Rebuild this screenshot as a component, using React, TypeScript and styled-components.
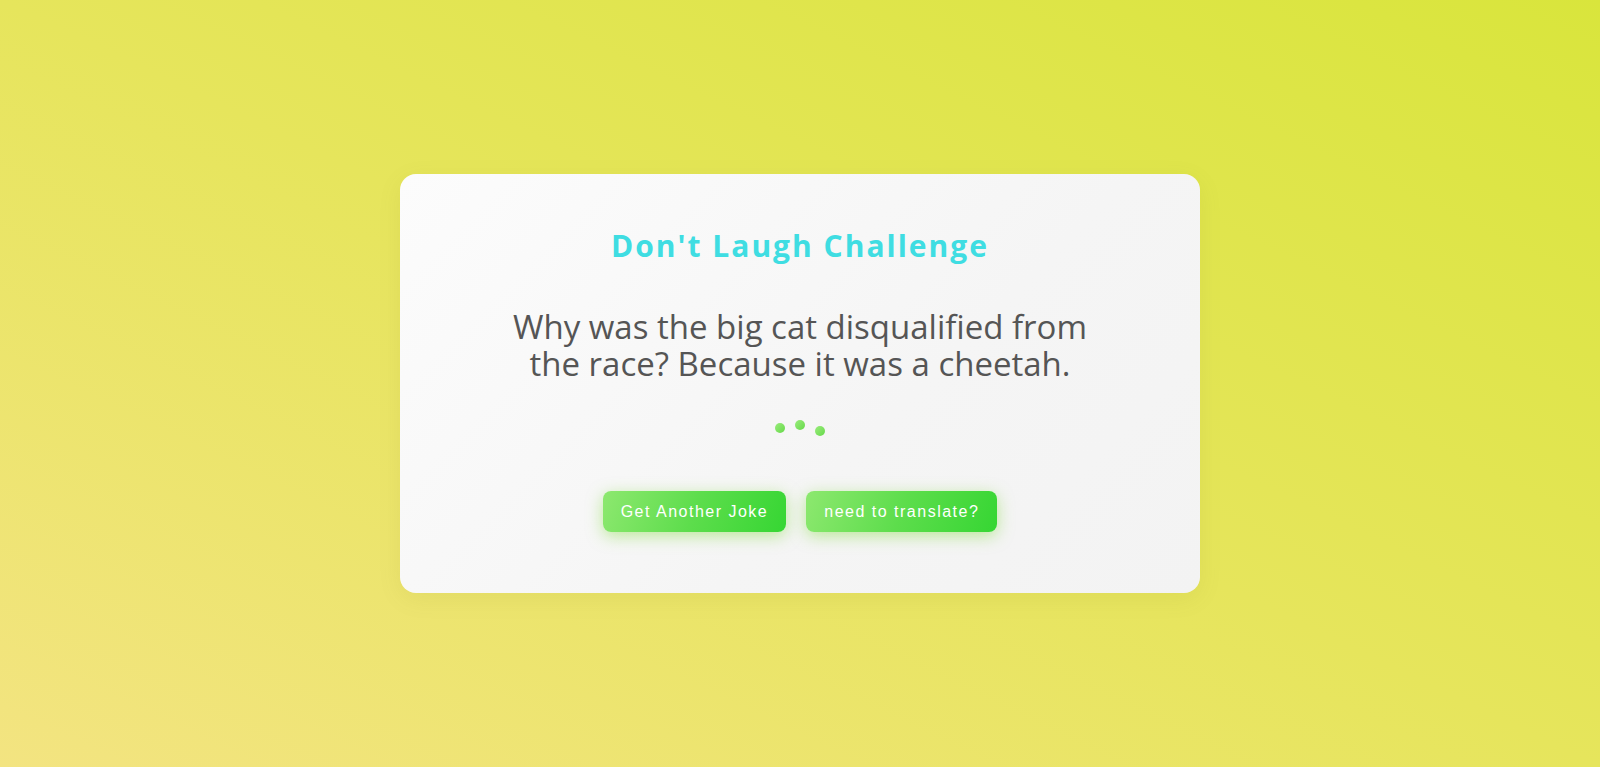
import styled, { createGlobalStyle } from "styled-components";

const GlobalStyle = createGlobalStyle`
  html, body {
    margin: 0;
    padding: 0;
  }
  body {
    font-family: "Open Sans", "Noto Sans", sans-serif;
  }
`;

const Page = styled.div`
  width: 100%;
  min-height: 100vh;
  display: flex;
  align-items: center;
  justify-content: center;
  background: linear-gradient(to top right, #f3e481 0%, #e6e55c 50%, #d9e53c 100%);
`;

const Card = styled.div`
  width: 800px;
  box-sizing: border-box;
  padding: 52px 60px 61px;
  border-radius: 16px;
  background: linear-gradient(135deg, #fcfcfc 0%, #f5f5f5 60%, #f3f3f3 100%);
  box-shadow: 0 6px 24px rgba(120, 120, 0, 0.08);
  display: flex;
  flex-direction: column;
  align-items: center;
  text-align: center;
`;

const Title = styled.h1`
  margin: 0;
  font-size: 30px;
  line-height: 40px;
  font-weight: 700;
  letter-spacing: 2px;
  color: #3fdde2;
`;

const Joke = styled.p`
  margin: 42px 0 0;
  max-width: 620px;
  font-size: 33px;
  line-height: 37px;
  font-weight: 400;
  color: #555555;
`;

const Dots = styled.div`
  margin-top: 38px;
  height: 20px;
  display: flex;
  gap: 10px;
  align-items: flex-start;
`;

const Dot = styled.span<{ $offset: number }>`
  width: 10px;
  height: 10px;
  border-radius: 50%;
  background: linear-gradient(135deg, #9aec7c, #66d94a);
  transform: translateY(${({ $offset }) => $offset}px);
`;

const ButtonRow = styled.div`
  margin-top: 51px;
  display: flex;
  gap: 20px;
`;

const Button = styled.button`
  height: 41px;
  padding: 0 18px;
  border: none;
  border-radius: 8px;
  background: linear-gradient(110deg, #8de86f 0%, #5ddd4c 50%, #36d633 100%);
  box-shadow: 0 4px 16px rgba(130, 220, 60, 0.5);
  color: #ffffff;
  font-family: "Liberation Sans", Arial, sans-serif;
  font-size: 16px;
  letter-spacing: 1.5px;
  cursor: pointer;
`;

export default function App() {
  return (
    <>
      <GlobalStyle />
      <Page>
        <Card>
          <Title>Don't Laugh Challenge</Title>
          <Joke>Why was the big cat disqualified from the race? Because it was a cheetah.</Joke>
          <Dots>
            <Dot $offset={3} />
            <Dot $offset={0} />
            <Dot $offset={6} />
          </Dots>
          <ButtonRow>
            <Button>Get Another Joke</Button>
            <Button>need to translate?</Button>
          </ButtonRow>
        </Card>
      </Page>
    </>
  );
}
